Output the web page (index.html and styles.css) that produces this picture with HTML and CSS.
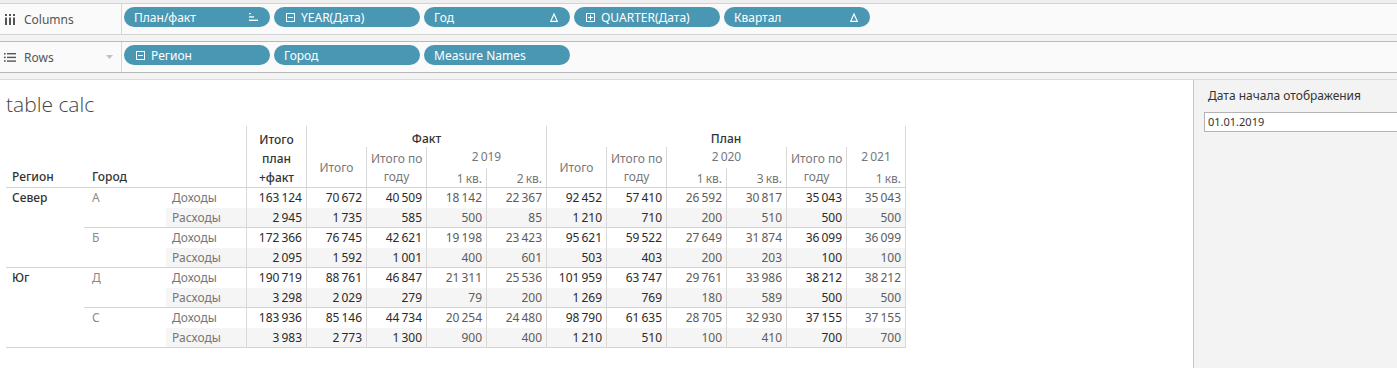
FILE: index.html
```html
<!DOCTYPE html>
<html lang="ru">
<head>
<meta charset="utf-8">
<title>table calc</title>
<link rel="stylesheet" href="styles.css">
</head>
<body>
<div class="app">
  <div class="topstrip"></div>
  <div class="shelf shelf-cols">
    <div class="shelf-label">
      <svg class="ico" width="11" height="11" viewBox="0 0 11 11"><rect x="0" y="0" width="2" height="2" fill="#555"/><rect x="4" y="0" width="2" height="2" fill="#555"/><rect x="8" y="0" width="2" height="2" fill="#555"/><rect x="0" y="3.5" width="2" height="7.5" fill="#555"/><rect x="4" y="3.5" width="2" height="7.5" fill="#555"/><rect x="8" y="3.5" width="2" height="7.5" fill="#555"/></svg>
      <span>Columns</span>
    </div>
    <div class="pills">
      <div class="pill"><span>План/факт</span><svg class="pill-r" width="9" height="8" viewBox="0 0 9 8"><rect x="0" y="0" width="2" height="1.3" fill="#fff"/><rect x="0" y="3.3" width="5" height="1.3" fill="#fff"/><rect x="0" y="6.6" width="9" height="1.4" fill="#fff"/></svg></div>
      <div class="pill"><span class="pill-l"><svg width="9" height="9" viewBox="0 0 9 9"><rect x="0.5" y="0.5" width="8" height="8" fill="none" stroke="#fff" stroke-width="1"/><rect x="2" y="4" width="5" height="1" fill="#fff"/></svg>YEAR(Дата)</span></div>
      <div class="pill"><span>Год</span><svg class="pill-r" width="8" height="9" viewBox="0 0 8 9"><path d="M4 1 L7.3 8.3 L0.7 8.3 Z" fill="none" stroke="#fff" stroke-width="1.2"/></svg></div>
      <div class="pill"><span class="pill-l"><svg width="9" height="9" viewBox="0 0 9 9"><rect x="0.5" y="0.5" width="8" height="8" fill="none" stroke="#fff" stroke-width="1"/><rect x="2" y="4" width="5" height="1" fill="#fff"/><rect x="4" y="2" width="1" height="5" fill="#fff"/></svg>QUARTER(Дата)</span></div>
      <div class="pill"><span>Квартал</span><svg class="pill-r" width="8" height="9" viewBox="0 0 8 9"><path d="M4 1 L7.3 8.3 L0.7 8.3 Z" fill="none" stroke="#fff" stroke-width="1.2"/></svg></div>
    </div>
  </div>
  <div class="shelf-gap"></div>
  <div class="shelf shelf-rows">
    <div class="shelf-label">
      <svg class="ico" width="12" height="9" viewBox="0 0 12 9"><rect x="0" y="0" width="1.6" height="1.6" fill="#555"/><rect x="3" y="0" width="9" height="1.4" fill="#555"/><rect x="0" y="3.6" width="1.6" height="1.6" fill="#555"/><rect x="3" y="3.7" width="9" height="1.4" fill="#555"/><rect x="0" y="7.2" width="1.6" height="1.6" fill="#555"/><rect x="3" y="7.4" width="9" height="1.4" fill="#555"/></svg>
      <span class="label-text">Rows</span>
      <svg class="caret" width="7" height="4" viewBox="0 0 7 4"><path d="M0 0 L7 0 L3.5 4 Z" fill="#c2c2c2"/></svg>
    </div>
    <div class="pills">
      <div class="pill"><span class="pill-l"><svg width="9" height="9" viewBox="0 0 9 9"><rect x="0.5" y="0.5" width="8" height="8" fill="none" stroke="#fff" stroke-width="1"/><rect x="2" y="4" width="5" height="1" fill="#fff"/></svg>Регион</span></div>
      <div class="pill"><span>Город</span></div>
      <div class="pill"><span>Measure Names</span></div>
    </div>
  </div>
  <div class="shelf-gap shelf-gap-bottom"></div>
  <div class="main">
    <div class="view">
      <h1 class="title">table calc</h1>
      <table class="crosstab">
        <colgroup>
          <col class="c-region"><col class="c-city"><col class="c-measure">
          <col class="c-num"><col class="c-num"><col class="c-num"><col class="c-num"><col class="c-num"><col class="c-num"><col class="c-num"><col class="c-num"><col class="c-num"><col class="c-num"><col class="c-num">
        </colgroup>
        <thead>
          <tr class="hr1">
            <th rowspan="3" class="dim">Регион</th>
            <th rowspan="3" colspan="2" class="dim dim-city">Город</th>
            <th rowspan="3" class="h-strong vl total3">Итого<br>план<br>+факт</th>
            <th colspan="4" class="h-strong vl">Факт</th>
            <th colspan="6" class="h-strong vl vr">План</th>
          </tr>
          <tr class="hr2">
            <th rowspan="2" class="h span2 vl">Итого</th>
            <th rowspan="2" class="h span2 wrap vl">Итого по<br>году</th>
            <th colspan="2" class="h vl">2&#8239;019</th>
            <th rowspan="2" class="h span2 vl">Итого</th>
            <th rowspan="2" class="h span2 wrap vl">Итого по<br>году</th>
            <th colspan="2" class="h vl">2&#8239;020</th>
            <th rowspan="2" class="h span2 wrap vl">Итого по<br>году</th>
            <th class="h vl vr">2&#8239;021</th>
          </tr>
          <tr class="hr3">
            <th class="h q vl">1&#8239;кв.</th>
            <th class="h q vl">2&#8239;кв.</th>
            <th class="h q vl">1&#8239;кв.</th>
            <th class="h q vl">3&#8239;кв.</th>
            <th class="h q vl vr">1&#8239;кв.</th>
          </tr>
        </thead>
        <tbody>
          <tr>
            <td rowspan="4" class="region gb">Север</td>
            <td rowspan="2" class="city gb">А</td>
            <td class="m">Доходы</td>
            <td class="n">163&#8239;124</td><td class="n">70&#8239;672</td><td class="n">40&#8239;509</td><td class="n q">18&#8239;142</td><td class="n q">22&#8239;367</td><td class="n">92&#8239;452</td><td class="n">57&#8239;410</td><td class="n q">26&#8239;592</td><td class="n q">30&#8239;817</td><td class="n">35&#8239;043</td><td class="n q vr">35&#8239;043</td>
          </tr>
          <tr class="alt gb-row">
            <td class="m">Расходы</td>
            <td class="n">2&#8239;945</td><td class="n">1&#8239;735</td><td class="n">585</td><td class="n q">500</td><td class="n q">85</td><td class="n">1&#8239;210</td><td class="n">710</td><td class="n q">200</td><td class="n q">510</td><td class="n">500</td><td class="n q vr">500</td>
          </tr>
          <tr>
            <td rowspan="2" class="city gb">Б</td>
            <td class="m">Доходы</td>
            <td class="n">172&#8239;366</td><td class="n">76&#8239;745</td><td class="n">42&#8239;621</td><td class="n q">19&#8239;198</td><td class="n q">23&#8239;423</td><td class="n">95&#8239;621</td><td class="n">59&#8239;522</td><td class="n q">27&#8239;649</td><td class="n q">31&#8239;874</td><td class="n">36&#8239;099</td><td class="n q vr">36&#8239;099</td>
          </tr>
          <tr class="alt gb-row">
            <td class="m">Расходы</td>
            <td class="n">2&#8239;095</td><td class="n">1&#8239;592</td><td class="n">1&#8239;001</td><td class="n q">400</td><td class="n q">601</td><td class="n">503</td><td class="n">403</td><td class="n q">200</td><td class="n q">203</td><td class="n">100</td><td class="n q vr">100</td>
          </tr>
          <tr>
            <td rowspan="4" class="region gb">Юг</td>
            <td rowspan="2" class="city gb">Д</td>
            <td class="m">Доходы</td>
            <td class="n">190&#8239;719</td><td class="n">88&#8239;761</td><td class="n">46&#8239;847</td><td class="n q">21&#8239;311</td><td class="n q">25&#8239;536</td><td class="n">101&#8239;959</td><td class="n">63&#8239;747</td><td class="n q">29&#8239;761</td><td class="n q">33&#8239;986</td><td class="n">38&#8239;212</td><td class="n q vr">38&#8239;212</td>
          </tr>
          <tr class="alt gb-row">
            <td class="m">Расходы</td>
            <td class="n">3&#8239;298</td><td class="n">2&#8239;029</td><td class="n">279</td><td class="n q">79</td><td class="n q">200</td><td class="n">1&#8239;269</td><td class="n">769</td><td class="n q">180</td><td class="n q">589</td><td class="n">500</td><td class="n q vr">500</td>
          </tr>
          <tr>
            <td rowspan="2" class="city gb">С</td>
            <td class="m">Доходы</td>
            <td class="n">183&#8239;936</td><td class="n">85&#8239;146</td><td class="n">44&#8239;734</td><td class="n q">20&#8239;254</td><td class="n q">24&#8239;480</td><td class="n">98&#8239;790</td><td class="n">61&#8239;635</td><td class="n q">28&#8239;705</td><td class="n q">32&#8239;930</td><td class="n">37&#8239;155</td><td class="n q vr">37&#8239;155</td>
          </tr>
          <tr class="alt gb-row">
            <td class="m">Расходы</td>
            <td class="n">3&#8239;983</td><td class="n">2&#8239;773</td><td class="n">1&#8239;300</td><td class="n q">900</td><td class="n q">400</td><td class="n">1&#8239;210</td><td class="n">510</td><td class="n q">100</td><td class="n q">410</td><td class="n">700</td><td class="n q vr">700</td>
          </tr>
        </tbody>
      </table>
    </div>
    <aside class="panel">
      <div class="panel-label">Дата начала отображения</div>
      <div class="panel-input">01.01.2019</div>
    </aside>
  </div>
</div>
</body>
</html>
```

FILE: styles.css
```css
* { box-sizing: border-box; }
html, body { margin: 0; padding: 0; }
body {
  width: 1397px;
  height: 368px;
  overflow: hidden;
  background: #f3f3f3;
  font-family: "Noto Sans", "Liberation Sans", sans-serif;
  font-size: 12px;
  color: #333;
}
.app { display: flex; flex-direction: column; height: 368px; }

.topstrip { height: 4px; background: #efefef; border-bottom: 1px solid #d3d3d3; }

.shelf { display: flex; background: #fafafa; }
.shelf-cols { height: 31px; border-bottom: 1px solid #d3d3d3; }
.shelf-rows { height: 32px; border-top: 1px solid #b9b9b9; border-bottom: 1px solid #b9b9b9; }
.shelf-gap { height: 6px; background: #f3f3f3; }
.shelf-gap-bottom { height: 7px; border-bottom: 1px solid #dadada; }

.shelf-label {
  width: 122px;
  flex: none;
  display: flex;
  align-items: center;
  padding-left: 4px;
  border-right: 1px solid #d6d6d6;
  color: #555;
  font-size: 12px;
}
.shelf-label .ico { margin-right: 8px; flex: none; }
.shelf-cols .shelf-label .ico { margin-left: 1px; margin-right: 8px; }
.label-text { flex: 1; }
.caret { margin-right: 8px; }

.pills { display: flex; gap: 4px; padding: 3px 0 0 2px; align-items: flex-start; }
.pill {
  width: 146px;
  height: 20px;
  border-radius: 10px;
  background: #4a97b3;
  color: #fff;
  font-size: 12px;
  display: flex;
  align-items: center;
  justify-content: space-between;
  padding: 0 12px 0 10px;
  white-space: nowrap;
}
.pill-l { display: flex; align-items: center; gap: 6px; }
.pill-l svg { margin-left: 2px; }

.main { flex: 1; display: flex; min-height: 0; }
.view { width: 1193px; background: #fff; padding-left: 6px; }
.title {
  margin: 11px 0 0 0;
  font-family: "Open Sans", "Noto Sans", sans-serif;
  font-weight: 300;
  font-size: 21px;
  line-height: 26px;
  color: #444;
}

.crosstab {
  margin-top: 9px;
  border-collapse: separate;
  border-spacing: 0;
  table-layout: fixed;
  width: 900px;
  font-size: 12px;
  white-space: nowrap;
}
.c-region { width: 78px; }
.c-city { width: 82px; }
.c-measure { width: 80px; }
.c-num { width: 60px; }

.crosstab th { font-weight: normal; padding: 0 4px; vertical-align: top; }
.hr1 th { height: 21px; line-height: 17px; padding-top: 4px; }
.hr2 th { height: 20px; line-height: 20px; }
.hr3 th { height: 20px; line-height: 17px; padding-top: 2px; border-bottom: 1px solid #d4d4d4; }

.crosstab th.dim {
  text-align: left;
  vertical-align: bottom;
  color: #333;
  font-weight: 500;
  padding: 0 0 2px 6px;
  border-bottom: 1px solid #d4d4d4;
  line-height: 17px;
}
.crosstab th.dim-city { padding-left: 8px; }
.h-strong { color: #333; font-weight: 500 !important; text-align: center; }
.crosstab th.total3 { line-height: 19px; padding-top: 4px; border-bottom: 1px solid #d4d4d4; }
.h { color: #777; text-align: center; }
.crosstab th.span2 { vertical-align: middle; border-bottom: 1px solid #d4d4d4; padding-top: 2px; }
.crosstab th.wrap { line-height: 18px; }
.crosstab th.q { text-align: right; }
.vl { border-left: 1px solid #d9d9d9; }
.vr { border-right: 1px solid #d9d9d9; }

.crosstab td { height: 20px; line-height: 20px; padding: 0; vertical-align: top; }
.region { padding-left: 6px !important; color: #333; font-weight: 500; }
.city { padding-left: 8px !important; color: #8a8a8a; }
.m { padding-left: 6px !important; color: #777; }
.n { text-align: right; padding-right: 4px !important; color: #2a2a2a; border-left: 1px solid #d9d9d9; }
.n.q { color: #5c5c5c; }
.alt .m, .alt .n { background: #f5f5f5; }
.gb, .gb-row td { border-bottom: 1px solid #d4d4d4; }
.gb-row td { height: 20px; line-height: 19px; }

.panel {
  flex: 1;
  background: #f3f3f3;
  border-left: 1px solid #c9c9c9;
  padding: 8px 0 0 10px;
  overflow: hidden;
}
.panel-label { padding-left: 4px; font-size: 12px; color: #333; line-height: 16px; }
.panel-input {
  margin-top: 8px;
  width: 200px;
  height: 20px;
  background: #fff;
  border: 1px solid #b3b3b3;
  padding-left: 3px;
  font-size: 11px;
  line-height: 18px;
  color: #333;
}
```
